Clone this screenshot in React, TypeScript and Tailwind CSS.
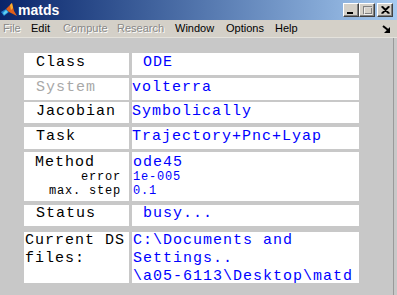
const mono = "font-['Liberation_Mono','Courier_New',monospace] tracking-[1px]";
const ui = "font-['Liberation_Sans',Arial,sans-serif]";

const menuItems = [
  { label: "File", w: "w-[28px]", disabled: true },
  { label: "Edit", w: "w-[32px]", disabled: false },
  { label: "Compute", w: "w-[54px]", disabled: true },
  { label: "Research", w: "w-[58px]", disabled: true },
  { label: "Window", w: "w-[51px]", disabled: false },
  { label: "Options", w: "w-[49px]", disabled: false },
  { label: "Help", w: "w-[30px]", disabled: false },
];

function MatlabLogo() {
  return (
    <svg width="16" height="16" viewBox="0 0 16 16">
      <polygon points="0,10 5,7 8,10 3,14" fill="#1f7fd0" />
      <polygon points="2,11 5,8 7,10 3,13" fill="#5fd0f0" />
      <polygon points="5,7 9,3 11,1 13,9 16,14 12,12 8,10" fill="#e0601a" />
      <polygon points="9,3 11,1 12,6 10,8" fill="#f8b030" />
    </svg>
  );
}

function CaptionButton({ kind }: { kind: "min" | "max" | "close" }) {
  return (
    <div className="flex h-[14px] w-[16px] items-center justify-center border border-t-white border-l-white border-r-[#404040] border-b-[#404040] bg-[#d4d0c8] shadow-[inset_-1px_-1px_0_#808080]">
      <svg width="10" height="9" viewBox="0 0 10 9">
        {kind === "min" && <rect x="1" y="6" width="6" height="2" fill="#000" />}
        {kind === "max" && (
          <>
            <rect x="1.5" y="0.5" width="8" height="7" fill="none" stroke="#808080" />
            <rect x="1" y="1" width="9" height="1" fill="#808080" />
            <rect x="2.5" y="1.5" width="8" height="7" fill="none" stroke="#fff" strokeOpacity="0.7" />
          </>
        )}
        {kind === "close" && (
          <path d="M1.5 0.5 L8.5 7.5 M8.5 0.5 L1.5 7.5 M2.5 0.5 L9.5 7.5 M9.5 0.5 L2.5 7.5" stroke="#000" strokeWidth="1.2" />
        )}
      </svg>
    </div>
  );
}

export default function App() {
  return (
    <div className="flex h-[295px] w-[397px] flex-col overflow-hidden bg-[#c8c8c8]">
      {/* title bar */}
      <div className="flex h-[20px] shrink-0 items-center bg-gradient-to-r from-[#0a246a] to-[#a6caf0] pl-[1px] pr-[4px]">
        <MatlabLogo />
        <span className={`${ui} ml-[1px] text-[14px] font-bold text-white`}>matds</span>
        <div className="ml-auto flex items-center">
          <CaptionButton kind="min" />
          <CaptionButton kind="max" />
          <div className="ml-[2px]">
            <CaptionButton kind="close" />
          </div>
        </div>
      </div>

      {/* menu bar */}
      <div className={`${ui} flex h-[18px] shrink-0 items-center bg-[#d4d0c8] pl-[3px] pr-[6px] text-[11px] border-b border-b-[#e4e2dc]`}>
        {menuItems.map((m) => (
          <span
            key={m.label}
            className={
              m.disabled
                ? `${m.w} text-[#888888] [text-shadow:1px_1px_0_#ffffff]`
                : `${m.w} text-black`
            }
          >
            {m.label}
          </span>
        ))}
        <svg className="ml-auto" width="9" height="8" viewBox="0 0 9 8">
          <path d="M1 1 L6 5" stroke="#000" strokeWidth="2" />
          <polygon points="8,2 8,8 2,8" fill="#000" />
        </svg>
      </div>

      {/* panel */}
      <div className="flex flex-1">
        <div className="flex flex-1 flex-col pl-[24px] pt-[15px]">
          <div className="flex gap-[3px]">
            <div className={`${mono} h-[22px] w-[105px] bg-white pl-[12px] pt-[1px] text-[15px] leading-[18px] text-black`}>Class</div>
            <div className={`${mono} h-[22px] w-[227px] bg-white pl-[1px] pt-[1px] text-[15px] leading-[18px] text-[#0000ff] whitespace-pre`}> ODE</div>
          </div>

          <div className="mt-[3px] flex gap-[3px]">
            <div className={`${mono} h-[22px] w-[105px] bg-white pl-[12px] pt-[1px] text-[15px] leading-[18px] text-[#a8a8a8]`}>System</div>
            <div className={`${mono} h-[22px] w-[227px] bg-white pt-[1px] text-[15px] leading-[18px] text-[#0000ff]`}>volterra</div>
          </div>

          <div className="mt-[2px] flex gap-[3px]">
            <div className={`${mono} h-[21px] w-[105px] bg-white pl-[12px] pt-[1px] text-[15px] leading-[18px] text-black`}>Jacobian</div>
            <div className={`${mono} h-[21px] w-[227px] bg-white pt-[1px] text-[15px] leading-[18px] text-[#0000ff]`}>Symbolically</div>
          </div>

          <div className="mt-[4px] flex gap-[3px]">
            <div className={`${mono} h-[22px] w-[105px] bg-white pl-[12px] pt-[1px] text-[15px] leading-[18px] text-black`}>Task</div>
            <div className={`${mono} h-[22px] w-[227px] bg-white pt-[1px] text-[15px] leading-[18px] text-[#0000ff]`}>Trajectory+Pnc+Lyap</div>
          </div>

          <div className="mt-[3px] flex gap-[3px]">
            <div className={`${mono} flex h-[49px] w-[105px] flex-col bg-white pl-[11px] pr-[8px] pt-[3px] text-black`}>
              <span className="text-[15px] leading-[15px]">Method</span>
              <span className="self-end text-[12px] leading-[14px] tracking-[0.8px]">error</span>
              <span className="self-end text-[12px] leading-[14px] tracking-[0.8px]">max. step</span>
            </div>
            <div className={`${mono} flex h-[49px] w-[227px] flex-col bg-white pl-[1px] pt-[3px] text-[#0000ff]`}>
              <span className="text-[15px] leading-[15px]">ode45</span>
              <span className="text-[12px] leading-[14px] tracking-[0.8px]">1e-005</span>
              <span className="text-[12px] leading-[14px] tracking-[0.8px]">0.1</span>
            </div>
          </div>

          <div className="mt-[4px] flex gap-[3px]">
            <div className={`${mono} h-[21px] w-[105px] bg-white pl-[12px] text-[15px] leading-[18px] text-black`}>Status</div>
            <div className={`${mono} h-[21px] w-[227px] bg-white pl-[1px] text-[15px] leading-[18px] text-[#0000ff] whitespace-pre`}> busy...</div>
          </div>

          <div className="mt-[6px] flex gap-[3px]">
            <div className={`${mono} h-[51px] w-[105px] bg-white pl-[1px] text-[15px] leading-[18px] text-black`}>
              <div className="whitespace-pre">Current DS</div>
              <div>files:</div>
            </div>
            <div className={`${mono} h-[51px] w-[227px] bg-white pl-[1px] text-[15px] leading-[18px] text-[#0000ff] whitespace-pre`}>
              <div>C:\Documents and</div>
              <div>Settings..</div>
              <div>\a05-6113\Desktop\matd</div>
            </div>
          </div>
        </div>
        <div className="w-[1px] bg-[#9a9a9a]" />
        <div className="w-[3px] bg-[#c8c8c8]" />
      </div>
    </div>
  );
}
